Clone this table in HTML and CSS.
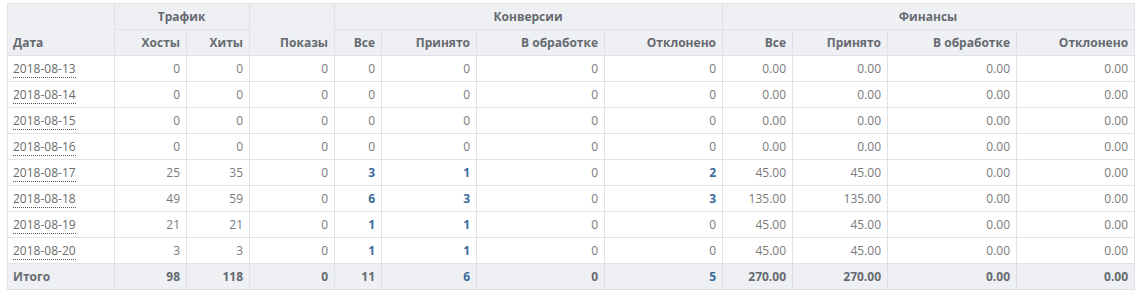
FILE: index.html
```html
<!DOCTYPE html>
<html lang="ru">
<head>
<meta charset="utf-8">
<link rel="stylesheet" href="styles.css">
</head>
<body>
<table class="stats">
  <colgroup>
    <col class="c1"><col class="c2"><col class="c3"><col class="c4"><col class="c5"><col class="c6">
    <col class="c7"><col class="c8"><col class="c9"><col class="c10"><col class="c11"><col class="c12">
  </colgroup>
  <thead>
    <tr>
      <th rowspan="2" class="left bottom">Дата</th>
      <th colspan="2" class="center">Трафик</th>
      <th rowspan="2" class="bottom">Показы</th>
      <th colspan="4" class="center">Конверсии</th>
      <th colspan="4" class="center">Финансы</th>
    </tr>
    <tr>
      <th>Хосты</th><th>Хиты</th>
      <th>Все</th><th>Принято</th><th>В обработке</th><th>Отклонено</th>
      <th>Все</th><th>Принято</th><th>В обработке</th><th>Отклонено</th>
    </tr>
  </thead>
  <tbody>
    <tr><td class="left"><span class="date">2018-08-13</span></td><td>0</td><td>0</td><td>0</td><td>0</td><td>0</td><td>0</td><td>0</td><td>0.00</td><td>0.00</td><td>0.00</td><td>0.00</td></tr>
    <tr><td class="left"><span class="date">2018-08-14</span></td><td>0</td><td>0</td><td>0</td><td>0</td><td>0</td><td>0</td><td>0</td><td>0.00</td><td>0.00</td><td>0.00</td><td>0.00</td></tr>
    <tr><td class="left"><span class="date">2018-08-15</span></td><td>0</td><td>0</td><td>0</td><td>0</td><td>0</td><td>0</td><td>0</td><td>0.00</td><td>0.00</td><td>0.00</td><td>0.00</td></tr>
    <tr><td class="left"><span class="date">2018-08-16</span></td><td>0</td><td>0</td><td>0</td><td>0</td><td>0</td><td>0</td><td>0</td><td>0.00</td><td>0.00</td><td>0.00</td><td>0.00</td></tr>
    <tr><td class="left"><span class="date">2018-08-17</span></td><td>25</td><td>35</td><td>0</td><td><a class="num">3</a></td><td><a class="num">1</a></td><td>0</td><td><a class="num">2</a></td><td>45.00</td><td>45.00</td><td>0.00</td><td>0.00</td></tr>
    <tr><td class="left"><span class="date">2018-08-18</span></td><td>49</td><td>59</td><td>0</td><td><a class="num">6</a></td><td><a class="num">3</a></td><td>0</td><td><a class="num">3</a></td><td>135.00</td><td>135.00</td><td>0.00</td><td>0.00</td></tr>
    <tr><td class="left"><span class="date">2018-08-19</span></td><td>21</td><td>21</td><td>0</td><td><a class="num">1</a></td><td><a class="num">1</a></td><td>0</td><td>0</td><td>45.00</td><td>45.00</td><td>0.00</td><td>0.00</td></tr>
    <tr><td class="left"><span class="date">2018-08-20</span></td><td>3</td><td>3</td><td>0</td><td><a class="num">1</a></td><td><a class="num">1</a></td><td>0</td><td>0</td><td>45.00</td><td>45.00</td><td>0.00</td><td>0.00</td></tr>
  </tbody>
  <tfoot>
    <tr><td class="left">Итого</td><td>98</td><td>118</td><td>0</td><td>11</td><td><a class="num">6</a></td><td>0</td><td><a class="num">5</a></td><td>270.00</td><td>270.00</td><td>0.00</td><td>0.00</td></tr>
  </tfoot>
</table>
</body>
</html>
```

FILE: styles.css
```css
html, body {
  background: #ffffff;
}
body {
  margin: 3px 0 0 7px;
  font-family: "Open Sans", "Liberation Sans", sans-serif;
  font-size: 12px;
  color: #7a7a7a;
}
.stats {
  border-collapse: collapse;
  table-layout: fixed;
  width: 1127px;
}
.c1 { width: 107px; }
.c2 { width: 72px; }
.c3 { width: 63px; }
.c4 { width: 85px; }
.c5 { width: 47px; }
.c6 { width: 95px; }
.c7 { width: 128px; }
.c8 { width: 118px; }
.c9 { width: 70px; }
.c10 { width: 95px; }
.c11 { width: 129px; }
.c12 { width: 118px; }
.stats th,
.stats td {
  border: 1px solid #dfe1e5;
  padding: 4px 6px 4px 5px;
  line-height: 17px;
  height: 17px;
  text-align: right;
  white-space: nowrap;
  overflow: hidden;
}
.stats th {
  background: #eef0f4;
  color: #666a70;
  font-weight: 700;
  vertical-align: middle;
}
.stats th.center { text-align: center; }
.stats th.bottom { vertical-align: bottom; }
.stats .left { text-align: left; }
.stats td { color: #7a7a7a; }
.date {
  color: #6b6b6b;
  border-bottom: 1px dotted #555;
}
.num {
  color: #3b6a9a;
  font-weight: 700;
}
.stats tfoot td {
  background: #eef0f4;
  color: #666a70;
  font-weight: 700;
}
```
